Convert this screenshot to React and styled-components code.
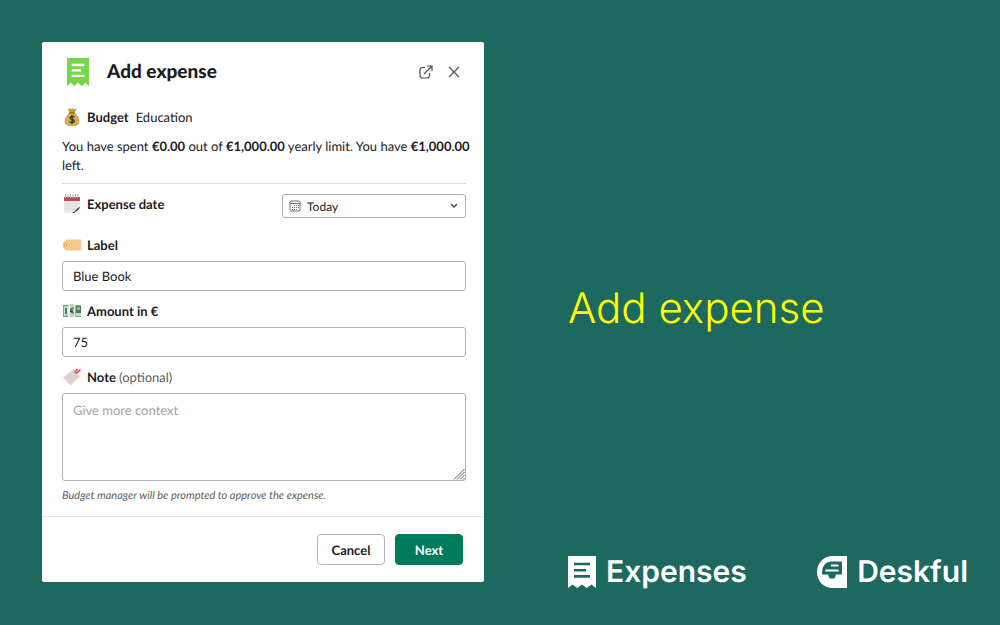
import React from 'react'
import styled, { createGlobalStyle, css } from 'styled-components'

const GlobalStyle = createGlobalStyle`
    * {
        box-sizing: border-box;
    }
    body {
        margin: 0;
        background: #1d695f;
        font-family: Lato, sans-serif;
        text-rendering: geometricPrecision;
    }
`

const ReceiptIcon = ({ width, height, color, line }) => (
    <svg width={width} height={height} viewBox="0 0 28 32" preserveAspectRatio="none" aria-hidden="true">
        <path fill={color} d="M0 0h28v32l-4.600-3.600-4.700 3.600-4.700-3.600-4.700 3.600-4.700-3.600L0 32z" />
        <path stroke={line} strokeWidth="2.6" d="M6 8h16M6 14.200h12M6 20.400h16" />
    </svg>
)

const DeskfulIcon = () => (
    <svg width="30" height="32" viewBox="0 0 30 32" aria-hidden="true">
        <path fill="#fff" d="M15.500 0H30v32H15.500C6.500 32 0 25 0 16S6.500 0 15.500 0z" />
        <path fill="#1d695f" d="M14.500 5.500H25v13h-6l-1.500 4h-5l-1.500-4H5c0-8 3-13 9.500-13z" />
        <path stroke="#fff" strokeWidth="2" d="M14 9.500h7.500M8.500 14.500h13" />
    </svg>
)

const MoneyBagIcon = () => (
    <svg width="18" height="18" viewBox="0 0 18 18" aria-hidden="true">
        <path fill="#c99a35" d="M5 .8c1.300-.6 2 .5 3 .2 1-.5 1.500-.6 2.500 0 .8.400 1.700-.6 3 0L11.500 5h-5z" />
        <path fill="#dcae48" stroke="#a87a25" strokeWidth=".6" d="M6.500 5h5c3 2.500 4.700 6 4 9.700-.5 2-2.200 2.800-6.500 2.800s-6-.8-6.500-2.800C1.800 11 3.500 7.500 6.500 5z" />
        <path stroke="#8a5f1c" strokeWidth="1" d="M6 5h6" />
        <path fill="none" stroke="#3b3a2c" strokeWidth="1.400" d="M11.400 9.300C10.800 8.300 7 8 6.900 10c0 2 4.500 1 4.500 3.100 0 2-4 2-4.700.4M9.100 7v9" />
    </svg>
)

const PadIcon = () => (
    <svg width="18" height="20" viewBox="0 0 18 20" aria-hidden="true">
        <path fill="#ececec" d="M1 4h16v10l-5 5H1z" />
        <path stroke="#d6d6d9" strokeWidth=".5" d="M1 9.500h16M1 12h16M1 14.500h14M4 7v12M7 7v12M10 7v12M13 7v9" />
        <path fill="#bf4c50" d="M1 3h16v4H1z" />
        <path stroke="#a8b0bb" strokeWidth="1" d="M2.500 0v4M5 0v4M7.500 0v4M10 0v4M12.500 0v4M15 0v4" />
        <path fill="#fff" d="M17 13v6h-6z" />
        <path fill="#55585e" d="M17.500 12.500l-2 3.500-4.500 3c-2 .3-2-.3-1-.8 2-.7 2.800-2.600 4.500-4z" />
    </svg>
)

const TagIcon = () => (
    <svg width="18" height="12" viewBox="0 0 18 12" aria-hidden="true">
        <path fill="#f5c78b" d="M3.500.5H18v11H3.500L0 8.500v-5z" />
        <circle cx="2.500" cy="6" r="1.300" fill="#fff" stroke="#a9855b" strokeWidth=".8" />
    </svg>
)

const EuroIcon = () => (
    <svg width="18" height="14" viewBox="0 0 18 14" aria-hidden="true">
        <path fill="#75a789" d="M0 1h18v12H0z" />
        <path fill="#d5e5d5" d="M1 2.500h4v9H1z" />
        <path fill="#42805c" d="M2 4h2v6H2zM11 2h7v9h-7z" />
        <path fill="#e8f0e8" d="M5 0h2v13H5zM11 0h1.500v13H11z" />
        <path fill="#b9d7bb" d="M7 0h4v13H7z" />
        <path fill="none" stroke="#244c39" strokeWidth="1" d="M11 4.500C8.500 3 7.800 5 7.800 6.500S8.500 10 11 8.500M7 6h3M7 7.500h3" />
        <path fill="#a7b65c" d="M14 3h3v3h-3z" />
        <path fill="#c8dcca" d="M13 9h5v3h-5z" />
    </svg>
)

const NoteIcon = () => (
    <svg width="18" height="18" viewBox="0 0 18 18" aria-hidden="true">
        <path fill="#dcd5cf" d="M0 9.500L10.500 1 17 8.500 7.500 17.500z" />
        <path stroke="#cfc7c0" strokeWidth=".5" d="M3 10l8-6.500M5 12.500l9-7.500M7 15l8-7" />
        <circle cx="13" cy="3.800" r="1.500" fill="#fff" />
        <path fill="none" stroke="#e5484d" strokeWidth="1.600" d="M11.500 4.500l3-3.500M13 5.500l4.500-4M12 2.500l1.500 3" />
    </svg>
)

const ExternalIcon = () => (
    <svg width="14" height="14" viewBox="0 0 14 14" fill="none" stroke="#505050" strokeWidth="1.200" aria-hidden="true">
        <path d="M6 2.500H3.500Q1 2.500 1 5v5.500Q1 13 3.500 13H8q2.500 0 2.500-2.500V8M5 9l7.500-7.500M8 1h5v5" />
    </svg>
)

const CloseIcon = () => (
    <svg width="12" height="12" viewBox="0 0 12 12" stroke="#505050" strokeWidth="1.200" aria-hidden="true">
        <path d="M1 1l10 10M11 1L1 11" />
    </svg>
)

const CalendarIcon = () => (
    <svg width="12" height="12" viewBox="0 0 12 12" fill="none" stroke="#707070" aria-hidden="true">
        <rect x="1" y="1" width="10" height="10" rx="1" />
        <path d="M1 3.500h10" />
        <path strokeDasharray="1 1" d="M5 5.500h5M3 7.500h7M3 9.500h5" />
    </svg>
)

const ChevronIcon = () => (
    <svg width="8" height="6" viewBox="0 0 8 6" fill="none" stroke="#454545" strokeWidth="1.400" aria-hidden="true">
        <path d="M1 1l3 3 3-3" />
    </svg>
)

const GripIcon = () => (
    <svg width="12" height="12" viewBox="0 0 12 12" stroke="#555" strokeWidth=".9" aria-hidden="true">
        <path d="M1 11.500L11.500 1M4 11.500L11.500 4M7 11.500L11.500 7M10 11.500l1.500-1.500" />
    </svg>
)

const App = () => {
    return (
        <Page>
            <GlobalStyle />
            <Modal>
                <Header>
                    <ReceiptIcon width={22} height={28} color="#78d64b" line="#fff" />
                    <Title>Add expense</Title>
                    <IconButton aria-label="Open in new window"><ExternalIcon /></IconButton>
                    <IconButton aria-label="Close"><CloseIcon /></IconButton>
                </Header>
                <Body>
                    <Heading>
                        <Emoji><MoneyBagIcon /></Emoji>
                        <b>Budget</b>
                        <Category>Education</Category>
                    </Heading>
                    <Summary>
                        You have spent <b>€0.00</b> out of <b>€1,000.00</b> yearly limit. You have <b>€1,000.00</b> left.
                    </Summary>
                    <DateRow>
                        <Label htmlFor="date"><Emoji><PadIcon /></Emoji>Expense date</Label>
                        <SelectBox>
                            <Select id="date" defaultValue="today">
                                <option value="today">Today</option>
                            </Select>
                            <SelectMark><CalendarIcon /></SelectMark>
                            <SelectMark $right><ChevronIcon /></SelectMark>
                        </SelectBox>
                    </DateRow>
                    <Field>
                        <Label htmlFor="label"><Emoji><TagIcon /></Emoji>Label</Label>
                        <Input id="label" defaultValue="Blue Book" />
                    </Field>
                    <Field>
                        <Label htmlFor="amount"><Emoji><EuroIcon /></Emoji>Amount in €</Label>
                        <Input id="amount" defaultValue="75" />
                    </Field>
                    <Field>
                        <Label htmlFor="note">
                            <Emoji><NoteIcon /></Emoji>
                            <span>Note <Optional>(optional)</Optional></span>
                        </Label>
                        <NoteBox>
                            <TextArea id="note" placeholder="Give more context" />
                            <Grip><GripIcon /></Grip>
                        </NoteBox>
                    </Field>
                    <Hint>Budget manager will be prompted to approve the expense.</Hint>
                </Body>
                <Footer>
                    <Button>Cancel</Button>
                    <Button $primary>Next</Button>
                </Footer>
            </Modal>
            <Aside>
                <Headline>Add expense</Headline>
                <Logos>
                    <Logo>
                        <ReceiptIcon width={28} height={32} color="#fff" line="#1d695f" />
                        Expenses
                    </Logo>
                    <Logo>
                        <DeskfulIcon />
                        Deskful
                    </Logo>
                </Logos>
            </Aside>
        </Page>
    )
}

export default App

const Page = styled.main`
    display: grid;
    grid-template-columns: 442fr 400fr;
    gap: 84px;
    min-height: 100vh;
    padding: 42px 32px 37px 42px;
`
const Modal = styled.section`
    align-self: start;
    background: #fff;
    border-radius: 2px;
    color: #1d1c1d;
`
const Header = styled.header`
    display: flex;
    align-items: center;
    height: 59px;
    padding: 0 22px 0 25px;
`
const Title = styled.h1`
    flex: 1;
    margin: 0 0 0 18px;
    font-size: 19px;
    font-weight: 900;
    line-height: 25px;
`
const IconButton = styled.button`
    display: flex;
    align-items: center;
    justify-content: center;
    width: 16px;
    height: 16px;
    margin-left: 12px;
    padding: 0;
    border: 0;
    background: none;
`
const Body = styled.div`
    padding: 5px 18px 12px 20px;
    font-size: 13px;
    line-height: 18px;
`
const Heading = styled.div`
    display: flex;
    align-items: center;
    height: 22px;
`
const Emoji = styled.span`
    display: flex;
    justify-content: center;
    width: 20px;
    margin-right: 5px;
`
const Category = styled.span`
    margin-left: 7px;
`
const Summary = styled.p`
    margin: 0 -12px 0 0;
    padding: 9px 0 8px;
    line-height: 19px;
`
const DateRow = styled.div`
    display: flex;
    align-items: flex-start;
    justify-content: space-between;
    padding: 10px 0 17px;
    border-top: 1px solid #dddddd;
`
const Label = styled.label`
    display: flex;
    align-items: center;
    height: 20px;
    font-weight: 700;
`
const Optional = styled.span`
    color: #616061;
    font-weight: 400;
`
const SelectBox = styled.div`
    position: relative;
    width: 184px;
`
const control = css`
    display: block;
    width: 100%;
    border: 1px solid #b0b0b0;
    border-radius: 3px;
    background: #fff;
    color: #1d1c1d;
    font-family: inherit;
    font-size: 13px;
    text-rendering: inherit;
    outline: none;
`
const Select = styled.select`
    ${control}
    height: 24px;
    padding: 0 24px;
    font-size: 12px;
    appearance: none;
`
const SelectMark = styled.span`
    position: absolute;
    top: 0;
    ${({ $right }) => ($right ? 'right: 8px;' : 'left: 7px;')}
    display: flex;
    align-items: center;
    height: 24px;
    pointer-events: none;
`
const Field = styled.div`
    display: grid;
    gap: 6px;
    margin-bottom: 10px;
`
const Input = styled.input`
    ${control}
    height: 30px;
    padding: 0 10px;
`
const NoteBox = styled.div`
    position: relative;
`
const TextArea = styled.textarea`
    ${control}
    height: 88px;
    padding: 7px 10px;
    line-height: 18px;
    resize: none;
    &::placeholder {
        color: #a3a3a3;
    }
`
const Grip = styled.span`
    position: absolute;
    right: 1px;
    bottom: 1px;
    display: flex;
    pointer-events: none;
`
const Hint = styled.p`
    margin: -4px 0 0;
    color: #616061;
    font-size: 11px;
    font-style: italic;
    line-height: 17px;
`
const Footer = styled.footer`
    display: flex;
    justify-content: flex-end;
    gap: 10px;
    padding: 17px 21px;
    border-top: 1px solid #e6e6e6;
`
const Button = styled.button`
    width: 68px;
    height: 31px;
    padding: 0;
    border: 1px solid ${({ $primary }) => ($primary ? '#007a5a' : '#b5b5b5')};
    border-radius: 4px;
    background: ${({ $primary }) => ($primary ? '#007a5a' : '#fff')};
    color: ${({ $primary }) => ($primary ? '#fff' : '#1d1c1d')};
    font-family: inherit;
    font-size: 13px;
    font-weight: 700;
    text-rendering: inherit;
`
const Aside = styled.aside`
    display: grid;
    grid-template-rows: 1fr auto 1fr;
`
const Headline = styled.h2`
    grid-row: 2;
    margin: 0;
    padding-bottom: 12px;
    color: #ffff00;
    font-family: Inter, sans-serif;
    font-size: 42px;
    font-weight: 300;
    line-height: 54px;
`
const Logos = styled.div`
    grid-row: 3;
    display: flex;
    align-items: flex-end;
    justify-content: space-between;
`
const Logo = styled.div`
    display: flex;
    align-items: center;
    gap: 10px;
    color: #fff;
    font-family: Inter, sans-serif;
    font-size: 30px;
    font-weight: 600;
    line-height: 32px;
`
